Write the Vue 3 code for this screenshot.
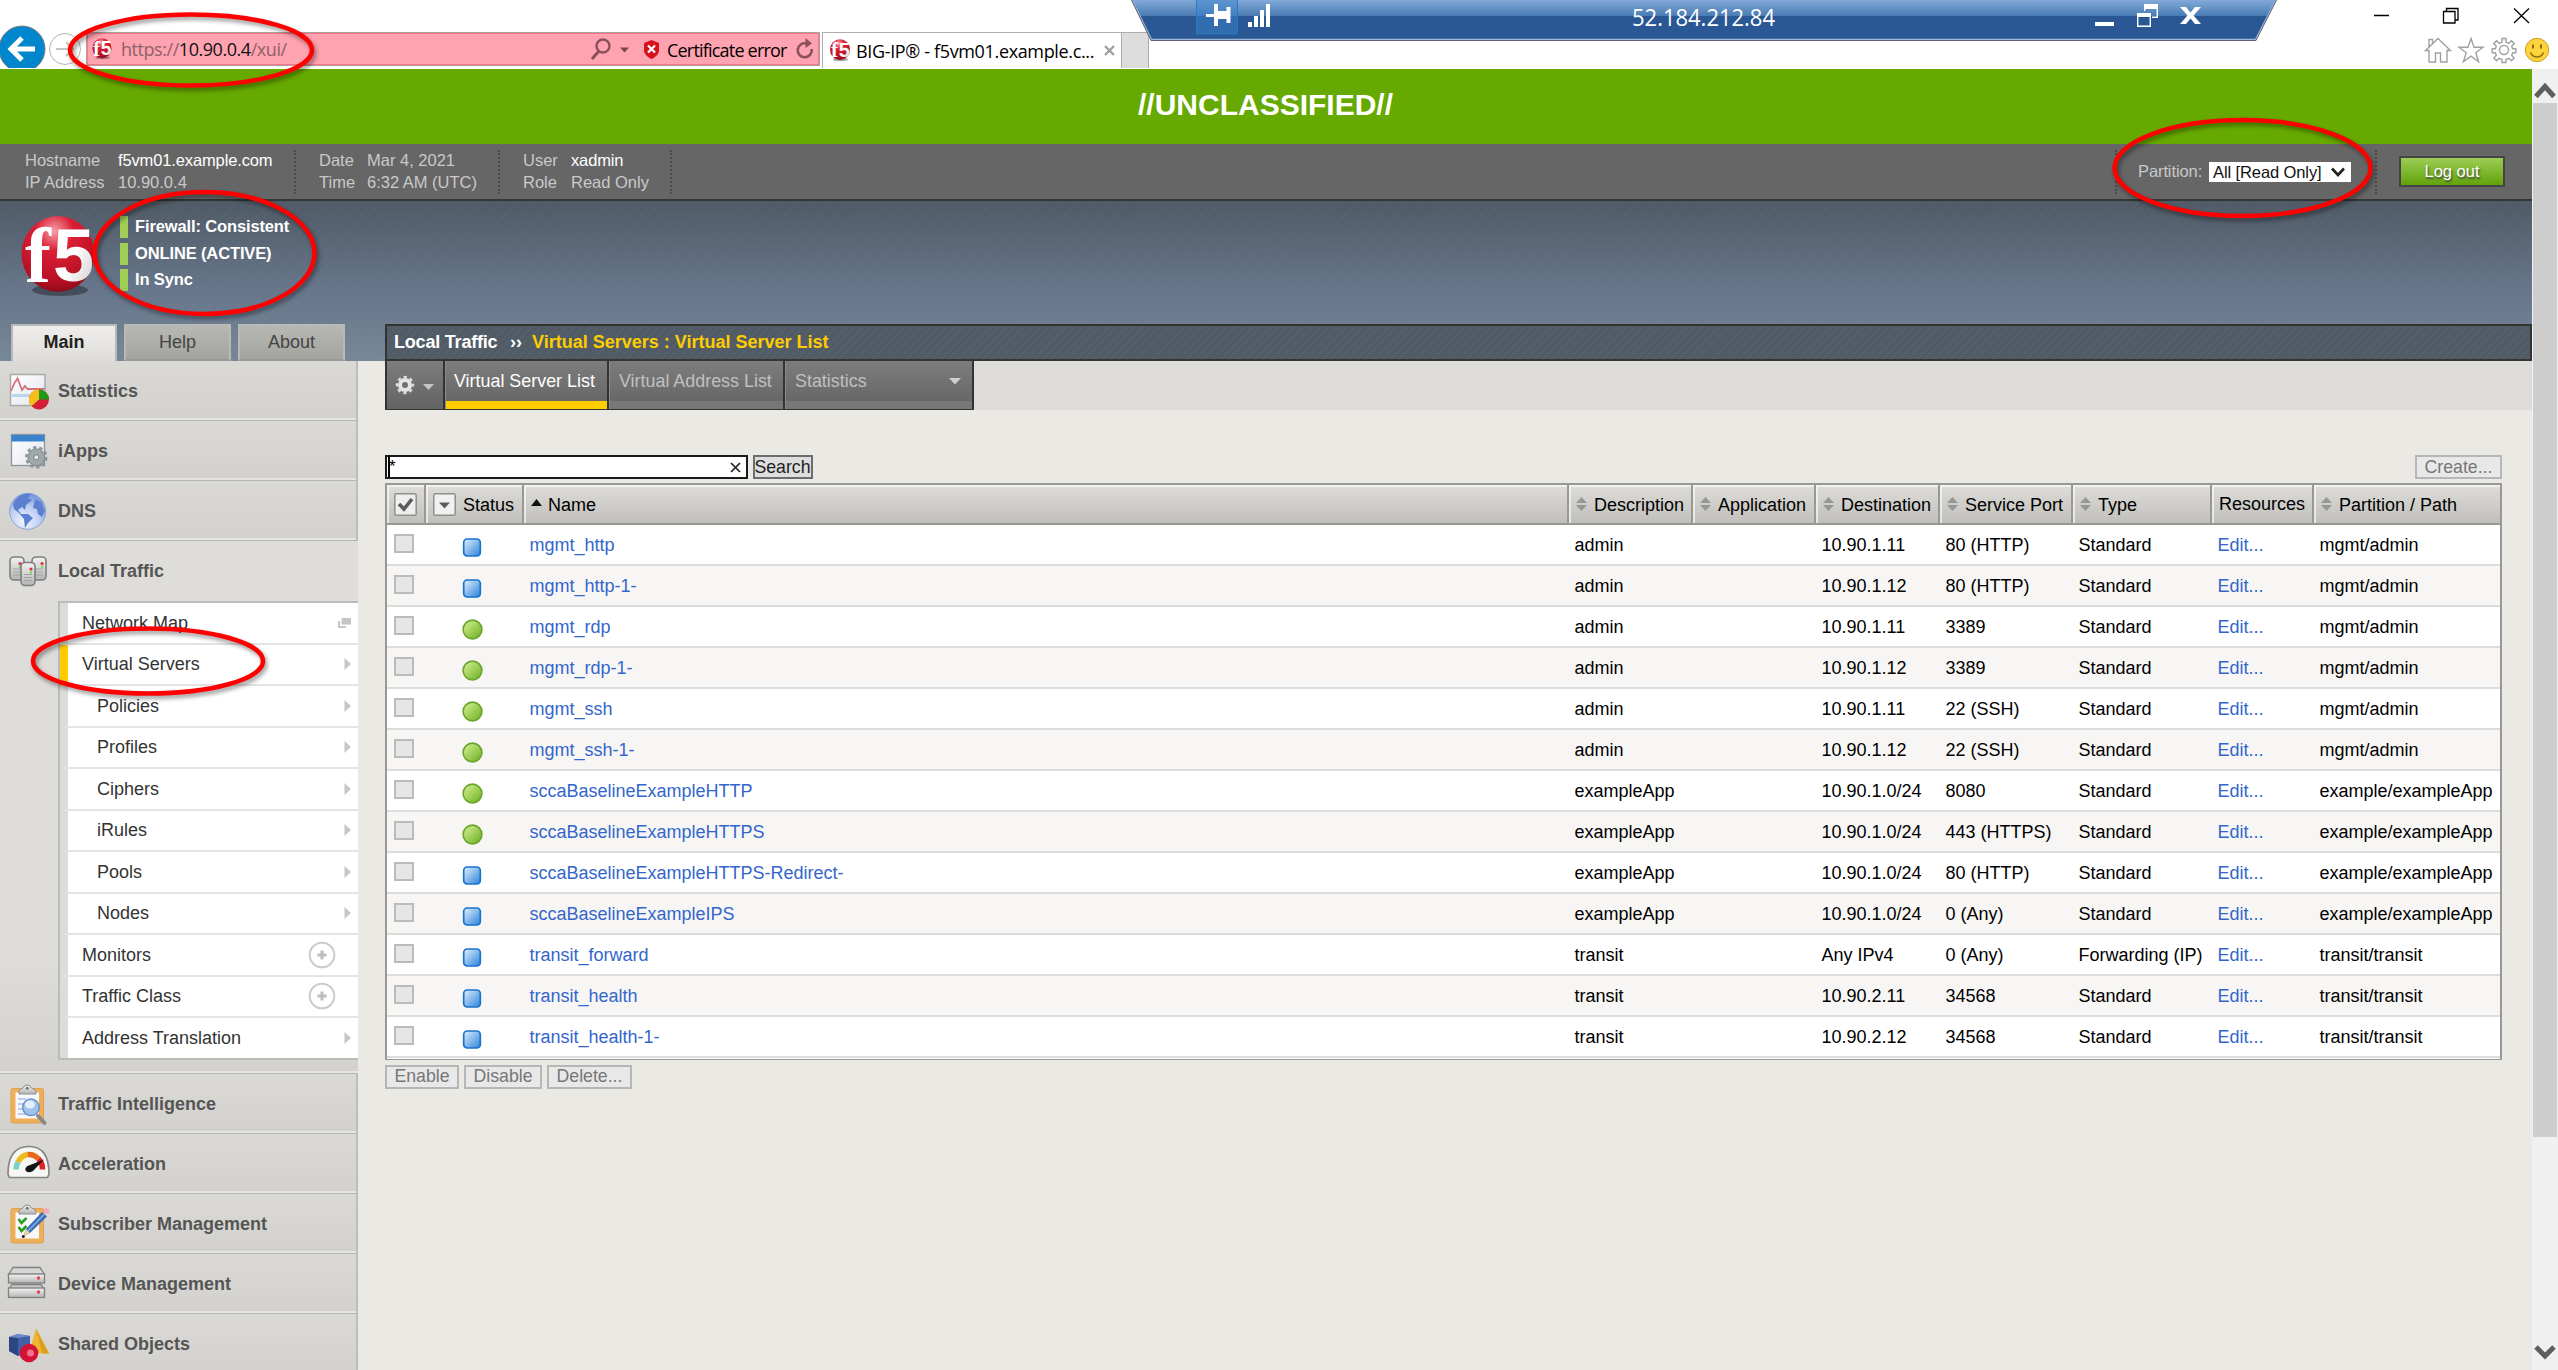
<script setup>
const tabs = ['Main', 'Help', 'About']
const topItems = [
  { label: 'Statistics', icon: 'stats' },
  { label: 'iApps', icon: 'iapps' },
  { label: 'DNS', icon: 'dns' },
  { label: 'Local Traffic', icon: 'traffic', open: true },
]
const bottomItems = [
  { label: 'Traffic Intelligence', icon: 'intel' },
  { label: 'Acceleration', icon: 'accel' },
  { label: 'Subscriber Management', icon: 'subscriber' },
  { label: 'Device Management', icon: 'device' },
  { label: 'Shared Objects', icon: 'shared' },
]
const submenu = [
  { label: 'Network Map', mark: 'window' },
  { label: 'Virtual Servers', mark: 'arrow', active: true },
  { label: 'Policies', mark: 'arrow', child: true },
  { label: 'Profiles', mark: 'arrow', child: true },
  { label: 'Ciphers', mark: 'arrow', child: true },
  { label: 'iRules', mark: 'arrow', child: true },
  { label: 'Pools', mark: 'arrow', child: true },
  { label: 'Nodes', mark: 'arrow', child: true },
  { label: 'Monitors', mark: 'plus' },
  { label: 'Traffic Class', mark: 'plus' },
  { label: 'Address Translation', mark: 'arrow' },
]
const statuses = ['Firewall: Consistent', 'ONLINE (ACTIVE)', 'In Sync']
const sortable = ['Description', 'Application', 'Destination', 'Service Port', 'Type']
const row = (up, name, desc, dest, port, path, type = 'Standard') => ({ up, name, desc, dest, port, type, path })
const rows = [
  row(false, 'mgmt_http', 'admin', '10.90.1.11', '80 (HTTP)', 'mgmt/admin'),
  row(false, 'mgmt_http-1-', 'admin', '10.90.1.12', '80 (HTTP)', 'mgmt/admin'),
  row(true, 'mgmt_rdp', 'admin', '10.90.1.11', '3389', 'mgmt/admin'),
  row(true, 'mgmt_rdp-1-', 'admin', '10.90.1.12', '3389', 'mgmt/admin'),
  row(true, 'mgmt_ssh', 'admin', '10.90.1.11', '22 (SSH)', 'mgmt/admin'),
  row(true, 'mgmt_ssh-1-', 'admin', '10.90.1.12', '22 (SSH)', 'mgmt/admin'),
  row(true, 'sccaBaselineExampleHTTP', 'exampleApp', '10.90.1.0/24', '8080', 'example/exampleApp'),
  row(true, 'sccaBaselineExampleHTTPS', 'exampleApp', '10.90.1.0/24', '443 (HTTPS)', 'example/exampleApp'),
  row(false, 'sccaBaselineExampleHTTPS-Redirect-', 'exampleApp', '10.90.1.0/24', '80 (HTTP)', 'example/exampleApp'),
  row(false, 'sccaBaselineExampleIPS', 'exampleApp', '10.90.1.0/24', '0 (Any)', 'example/exampleApp'),
  row(false, 'transit_forward', 'transit', 'Any IPv4', '0 (Any)', 'transit/transit', 'Forwarding (IP)'),
  row(false, 'transit_health', 'transit', '10.90.2.11', '34568', 'transit/transit'),
  row(false, 'transit_health-1-', 'transit', '10.90.2.12', '34568', 'transit/transit'),
]
</script>

<template>
  <div class="screen">
    <!-- shared gradients -->
    <svg class="defs" width="0" height="0">
      <defs>
        <radialGradient id="ball" cx=".45" cy=".2" r=".85">
          <stop offset="0" stop-color="#f4a0a8" /><stop offset=".3" stop-color="#dc1f35" />
          <stop offset=".8" stop-color="#b40f22" /><stop offset="1" stop-color="#7c0a16" />
        </radialGradient>
        <linearGradient id="digit" x1="0" y1="0" x2="1" y2="1">
          <stop offset=".5" stop-color="#fff" /><stop offset="1" stop-color="#c4c4c4" />
        </linearGradient>
        <linearGradient id="silver" x1="0" y1="0" x2="0" y2="1">
          <stop offset="0" stop-color="#f2f2f2" /><stop offset="1" stop-color="#b4b4b4" />
        </linearGradient>
        <linearGradient id="paper" x1="0" y1="0" x2="1" y2="1">
          <stop offset="0" stop-color="#fff" /><stop offset="1" stop-color="#e4e6ee" />
        </linearGradient>
        <linearGradient id="upfill" x1="0" y1="0" x2="1" y2="1">
          <stop offset="0" stop-color="#d4f0a0" /><stop offset=".35" stop-color="#b2dc6c" /><stop offset="1" stop-color="#6aac20" />
        </linearGradient>
        <linearGradient id="unkfill" x1="0" y1="0" x2="1" y2="1">
          <stop offset="0" stop-color="#e2f0fc" /><stop offset="1" stop-color="#2a84dc" />
        </linearGradient>
        <radialGradient id="globe" cx=".4" cy=".8" r=".9">
          <stop offset="0" stop-color="#f2f6ff" /><stop offset=".5" stop-color="#bccdf2" /><stop offset="1" stop-color="#5f86d8" />
        </radialGradient>
        <symbol id="f5" viewBox="0 0 80 84">
          <ellipse cx="42" cy="75" rx="28" ry="6" fill="#000" opacity=".35" />
          <ellipse cx="40" cy="39" rx="36.500" ry="38" fill="url(#ball)" />
          <text x="7" y="67" font-family="Liberation Serif, serif" font-weight="700" font-size="78" fill="#fff">f</text>
          <text x="35" y="66" font-family="Liberation Sans, sans-serif" font-weight="700" font-size="74" fill="url(#digit)">5</text>
        </symbol>
      </defs>
    </svg>

    <!-- browser chrome -->
    <div class="chrome">
      <svg class="nav" width="86" height="68" viewBox="0 0 86 68">
        <circle cx="22" cy="49" r="23" fill="#0086cd" stroke="#7d7d7d" />
        <path d="M35 49H11M22 38L11 49l11 11" fill="none" stroke="#fff" stroke-width="5" />
        <circle cx="65" cy="49" r="15.5" fill="#fff" stroke="#b5b5b5" />
        <path d="M56 49h17M66 42l7 7-7 7" fill="none" stroke="#c4c4c4" stroke-width="2" />
      </svg>
      <div class="address">
        <svg class="fav" width="22" height="22"><use href="#f5" /></svg>
        <span class="url">https://<b>10.90.0.4</b>/xui/</span>
        <svg width="40" height="22" viewBox="0 0 40 22" class="mag">
          <circle cx="12" cy="8" r="6.5" fill="none" stroke="#8b5059" stroke-width="2.4" />
          <path d="M8 13L1 21" stroke="#8b5059" stroke-width="3" /><path d="M29 9.500h9l-4.500 5z" fill="#7c464e" />
        </svg>
        <svg width="17" height="19" viewBox="0 0 17 19" class="shield">
          <path d="M8.500 0L16 3v7c0 4-3 7-7.500 9C4 17 1 14 1 10V3z" fill="#d6121d" />
          <path d="M5 5.500l7 7M12 5.500l-7 7" stroke="#fff" stroke-width="2.200" />
        </svg>
        <span class="cert">Certificate error</span>
        <svg width="18" height="22" viewBox="0 0 18 22" class="reload">
          <path d="M10.500 5.500A7 7 0 1 0 15.600 11" fill="none" stroke="#8b5059" stroke-width="2.600" /><path d="M9.500 0l6.500 5.500-6.500 4.500z" fill="#8b5059" />
        </svg>
      </div>
      <div class="btab">
        <svg width="22" height="23"><use href="#f5" /></svg>
        <span class="btitle">BIG-IP® - f5vm01.example.c...</span>
        <svg class="bx" width="11" height="11" viewBox="0 0 11 11"><path d="M1 1l9 9M10 1l-9 9" stroke="#9c9c9c" stroke-width="2.200" /></svg>
      </div>
      <div class="newtab"></div>
      <div class="winside">
        <svg width="160" height="69" viewBox="2398 0 160 69">
          <g fill="none" stroke="#000" stroke-width="1.300">
            <path d="M2374 15.500h15M2443.500 11.500h11.500v11.500h-11.500zM2446.500 11.500V8.500h11.500v11.500h-3M2514 8.500l15 14.500M2529 8.500l-15 14.500" />
          </g>
          <g fill="none" stroke="#a0a0a0" stroke-width="1.400">
            <path d="M2425.500 50.500l12.500-12 12.500 12h-3.500v11.500h-6.500v-9h-5v9h-6.500V50.500zM2429 46.500v-7h3.500v4" />
            <path d="M2471 38.500l3 8.700h9l-7.200 5.500 2.800 9-7.600-5.500-7.600 5.500 2.800-9-7.200-5.500h9z" />
            <circle cx="2504" cy="50" r="4.500" />
            <path d="M2502 38.500h4v3.600l2.800 1.200 2.600-2.500 2.800 2.800-2.500 2.600 1.100 2.600h3v4h-3l-1.100 2.600 2.500 2.600-2.800 2.800-2.600-2.500-2.800 1.200v3h-4v-3l-2.800-1.200-2.600 2.500-2.800-2.800 2.500-2.600-1.100-2.600h-3v-4h3l1.100-2.600-2.500-2.600 2.800-2.800 2.600 2.500 2.800-1.200z" />
          </g>
          <circle cx="2537" cy="50" r="11.700" fill="#fdd43c" stroke="#c9a021" />
          <path d="M2533 44.500v4M2541 44.500v4" stroke="#8c6c10" stroke-width="2" />
          <path d="M2530.500 52.500c2.500 6 10.500 6 13 0" fill="none" stroke="#8c6c10" stroke-width="1.600" />
        </svg>
      </div>
    </div>

    <div class="body">
      <div class="page">
        <div class="banner">//UNCLASSIFIED//</div>

        <div class="info">
          <dl class="hostinfo"><dt>Hostname</dt><dd class="hi">f5vm01.example.com</dd><dt>IP Address</dt><dd>10.90.0.4</dd></dl>
          <dl class="dateinfo"><dt>Date</dt><dd>Mar 4, 2021</dd><dt>Time</dt><dd>6:32 AM (UTC)</dd></dl>
          <dl class="userinfo"><dt>User</dt><dd class="hi">xadmin</dd><dt>Role</dt><dd>Read Only</dd></dl>
          <div class="partition">
            <span>Partition:</span>
            <div class="select">All [Read Only]
              <svg width="14" height="10" viewBox="0 0 14 10"><path d="M1 1.500l6 6.500 6-6.500" fill="none" stroke="#222" stroke-width="2.600" /></svg>
            </div>
          </div>
          <div class="logout">Log out</div>
        </div>

        <div class="bluehead">
          <div class="brand">
            <svg width="80" height="84"><use href="#f5" /></svg>
            <ul><li v-for="s in statuses" :key="s">{{ s }}</li></ul>
          </div>
          <div class="headrow">
            <nav class="tabs"><div v-for="(t, i) in tabs" :key="t" :class="['tab', { on: i === 0 }]">{{ t }}</div></nav>
            <div class="crumbs"><span>Local Traffic</span><i>››</i><em>Virtual Servers : Virtual Server List</em></div>
          </div>
        </div>

        <div class="columns">
          <aside class="sidebar">
            <template v-for="group in [topItems, bottomItems]" :key="group[0].label">
              <div v-for="it in group" :key="it.label" :class="['item', { open: it.open }]">
                <svg width="48" height="48" viewBox="0 0 48 48">
                  <g v-if="it.icon === 'stats'">
                    <rect x="6.500" y="7.500" width="34.500" height="31" fill="url(#paper)" stroke="#a9a9a9" stroke-width="1.500" />
                    <rect x="8" y="27" width="26" height="3" fill="#bcd6ee" />
                    <path d="M7 24l3.500-8 3-4.500 4.500 11.500 3-4 2.500 3h17" fill="none" stroke="#d8707a" stroke-width="1.800" />
                    <circle cx="35" cy="32.500" r="10" fill="#d21f35" />
                    <path d="M35 32.500V22.500a10 10 0 0 0-7.500 16.700z" fill="#f6be1c" /><path d="M35 32.500V22.500a10 10 0 0 1 10 10z" fill="#1f9a14" />
                  </g>
                  <g v-else-if="it.icon === 'iapps'">
                    <rect x="7.500" y="7.500" width="33" height="31" fill="url(#paper)" stroke="#8e959c" stroke-width="1.300" />
                    <rect x="7.500" y="8" width="33" height="6.500" fill="#3b82cc" />
                    <circle cx="32.300" cy="30.300" r="8.500" fill="#9fa9a9" stroke="#7d8788" />
                    <circle cx="32.300" cy="30.300" r="10" fill="none" stroke="#8b9596" stroke-width="2.500" stroke-dasharray="3.300 2.930" />
                    <circle cx="32.300" cy="30.300" r="2.500" fill="#e8eaea" stroke="#737c7c" />
                  </g>
                  <g v-else-if="it.icon === 'dns'">
                    <circle cx="23.700" cy="24.300" r="18" fill="url(#globe)" stroke="#8aa2d8" />
                    <path d="M9 17c4-9 12-11 18-10l-3 4 4 2-6 5-1 5-3-3-4 3 3 4 7 0 5 4-5 5-3 5-1-9-5-6-5-4z" fill="#5c80cf" />
                    <path d="M31 12l6 3 4 9-3 6-4-3-1-5-4-1 1-4z" fill="#5c80cf" />
                  </g>
                  <g v-else-if="it.icon === 'traffic'">
                    <g v-for="(p, i) in [[6, 10], [28, 10], [17, 15.500]]" :key="i">
                      <rect :x="p[0]" :y="p[1]" width="14" height="23" rx="4" fill="url(#silver)" stroke="#7e7e7e" stroke-width="1.600" />
                      <path :d="`M${p[0] + 3} ${p[1] + 12}h8m-8 3h8m-8 3h8`" stroke="#a2a2a2" />
                      <circle :cx="p[0] + 10" :cy="p[1] + 6.500" r="1.600" fill="#e4313f" /><circle :cx="p[0] + 10" :cy="p[1] + 9.800" r="1.200" fill="#6fdc4a" />
                    </g>
                  </g>
                  <g v-else-if="it.icon === 'intel' || it.icon === 'subscriber'">
                    <rect x="7" y="8.500" width="32.500" height="34.500" rx="2" fill="#efae58" stroke="#dfa050" />
                    <rect x="11.500" y="12.500" width="23.500" height="26" fill="#f7f8fc" />
                    <path d="M15 14v-2.500q1-3 4-3.500a4.500 4.500 0 0 1 8.500 0q3.500 .5 4.500 3.500v2.500z" fill="url(#silver)" stroke="#8e8e8e" />
                    <circle cx="23.300" cy="8.300" r="1.500" fill="#777" />
                    <g v-if="it.icon === 'intel'">
                      <path d="M14 19h8m-8 5h5m-5 5h5m-5 5h8" stroke="#a9bce6" stroke-width="1.500" />
                      <path d="M34 36l6.500 7" stroke="#8a8a8a" stroke-width="4" stroke-linecap="round" />
                      <circle cx="27" cy="27.300" r="8.300" fill="#9fc4ec" stroke="#6f93c8" stroke-width="1.500" /><ellipse cx="26" cy="24.500" rx="5" ry="4" fill="#e2f0fd" />
                    </g>
                    <g v-else>
                      <path d="M14.500 19l3 4 5-5M14.500 27l3 4 5-5" fill="none" stroke="#2aa01c" stroke-width="2.600" />
                      <path d="M19 37l3-8L38 12l5 4.500L26 33z" fill="#3a6db4" /><path d="M24 31L40.500 14" stroke="#86b0e4" stroke-width="1.500" />
                      <path d="M19 37l3-8 4 4z" fill="#efce98" /><circle cx="19.300" cy="36.500" r="1.500" fill="#222" /><circle cx="42.500" cy="11" r="3" fill="#f4acc2" />
                    </g>
                  </g>
                  <g v-else-if="it.icon === 'accel'">
                    <path d="M4 34q0-27 20.500-27.500T45 34l-1.500 3.500h-38z" fill="#f6f6f4" stroke="#858585" stroke-width="1.700" />
                    <g fill="none" stroke-width="5.500">
                      <path d="M12 29.500q0-4 2-7.500" stroke="#79d3ca" /><path d="M14 22q3.500-6.500 9.500-7.500" stroke="#edbb1c" />
                      <path d="M23.500 14.500q7-.5 11 4.500" stroke="#ea6a1c" /><path d="M34.500 19q4 4 4 10.500" stroke="#e31e24" />
                    </g>
                    <path d="M40 19.500L29 31q-5 2.500-7 0t1.500-5z" fill="#141414" />
                  </g>
                  <g v-else-if="it.icon === 'device'" stroke="#808080" stroke-width="1.300">
                    <path d="M8 24.500h29l3.500 5h-36z" fill="#c9c9c9" /><rect x="4.500" y="28" width="36" height="9.500" fill="url(#silver)" />
                    <path d="M9 7.500h27l4.500 7h-36z" fill="#d6d6d6" /><rect x="4.500" y="14" width="36" height="9" fill="url(#silver)" />
                    <g fill="#ee3c4a" stroke="none"><circle cx="34.500" cy="18" r="1.700" /><circle cx="34.500" cy="32" r="1.700" /></g>
                  </g>
                  <g v-else>
                    <path d="M5 17l9-3 12 2v17l-12 3-9-5z" fill="#4261a4" /><path d="M5 17l9 1 12-2-12-2z" fill="#6d8bcb" /><path d="M5 17l9 1v18l-9-5z" fill="#2c4681" />
                    <path d="M32 8.500L25 33l20 0.500z" fill="#f0b531" /><path d="M32 8.500l6 25 7 0z" fill="#dc9f20" />
                    <circle cx="25" cy="33" r="9.300" fill="#d31236" /><circle cx="26.500" cy="33" r="3.500" fill="#f0738c" />
                  </g>
                </svg>
                <span>{{ it.label }}</span>
              </div>
              <div v-if="group === topItems" class="subwrap">
                <div class="submenu">
                  <div v-for="s in submenu" :key="s.label" :class="['sub', { child: s.child, active: s.active }]">
                    <span>{{ s.label }}</span>
                    <svg v-if="s.mark === 'arrow'" width="7" height="12" viewBox="0 0 7 12"><path d="M0.500 0L7 6 .5 12z" fill="#c6c6c6" /></svg>
                    <svg v-else-if="s.mark === 'window'" width="13" height="10" viewBox="0 0 13 10"><path d="M3.500 0H13v6.500H3.500zM0 3h2v5h6v2H0z" fill="#c6c6c6" /></svg>
                    <svg v-else class="plus" width="28" height="28" viewBox="0 0 28 28"><circle cx="14" cy="14" r="12.300" fill="none" stroke="#cbcbcb" stroke-width="2" /><path d="M14 9.500v9M9.500 14h9" stroke="#bdbdbd" stroke-width="3" /></svg>
                  </div>
                </div>
              </div>
            </template>
          </aside>

          <main class="content">
            <div class="menubar">
              <div class="gearcell">
                <svg width="40" height="20" viewBox="0 0 40 20">
                  <circle cx="10" cy="10" r="5" fill="none" stroke="#e4e4e4" stroke-width="4" /><circle cx="10" cy="10" r="8" fill="none" stroke="#dcdcdc" stroke-width="2.500" stroke-dasharray="3.200 3.083" stroke-dashoffset="1.600" />
                  <path d="M28 9h11l-5.500 6z" fill="#c4c4c4" />
                </svg>
              </div>
              <div class="mtab on vsl">Virtual Server List</div>
              <div class="mtab val">Virtual Address List</div>
              <div class="mtab st">Statistics<svg width="12" height="7" viewBox="0 0 12 7"><path d="M0 0h12L6 6.500z" fill="#d0d0d0" /></svg></div>
            </div>

            <div class="panel">
              <div class="toolbar">
                <div class="searchbox"><span>*</span><svg width="11" height="11" viewBox="0 0 11 11"><path d="M1 1l9 9M10 1l-9 9" stroke="#222" stroke-width="1.700" /></svg></div>
                <div class="btn search">Search</div>
                <div class="btn off create">Create...</div>
              </div>

              <div class="grid">
                <div class="tr head">
                  <div class="th box"><svg width="23" height="23" viewBox="0 0 23 23"><rect x=".8" y=".8" width="21.400" height="21.400" rx="1.500" fill="#eee" stroke="#8f8f8f" stroke-width="1.500" /><path d="M5 11l5 5 8-10" fill="none" stroke="#5c5c5c" stroke-width="3.600" /></svg></div>
                  <div class="th box"><svg width="23" height="23" viewBox="0 0 23 23"><rect x=".8" y=".8" width="21.400" height="21.400" rx="1.500" fill="#f1f1f1" stroke="#8f8f8f" stroke-width="1.500" /><path d="M6 9.500h11L11.500 15.500z" fill="#5c5c5c" /></svg><span class="sttext">Status</span></div>
                  <div class="th nm"><svg width="11" height="7" viewBox="0 0 11 7"><path d="M5.500 0L11 7H0z" fill="#111" /></svg><span>Name</span></div>
                  <div v-for="h in sortable" :key="h" class="th"><svg class="sort" width="11" height="14" viewBox="0 0 11 14"><path d="M5.500 0L11 6H0zM0 8h11l-5.500 6z" fill="#979797" /></svg><span>{{ h }}</span></div>
                  <div class="th res"><span>Resources</span></div>
                  <div class="th"><svg class="sort" width="11" height="14" viewBox="0 0 11 14"><path d="M5.500 0L11 6H0zM0 8h11l-5.500 6z" fill="#979797" /></svg><span>Partition / Path</span></div>
                </div>
                <div v-for="r in rows" :key="r.name" class="tr">
                  <div class="td"><i class="check"></i></div>
                  <div class="td">
                    <svg v-if="r.up" class="state" width="21" height="21" viewBox="0 0 21 21"><circle cx="10.500" cy="10.500" r="9.400" fill="url(#upfill)" stroke="#6aa52c" stroke-width="1.600" /></svg>
                    <svg v-else class="state" width="21" height="21" viewBox="0 0 21 21"><rect x="1.700" y="2" width="16.600" height="17" rx="3.500" fill="url(#unkfill)" stroke="#1a72cc" stroke-width="1.700" /></svg>
                  </div>
                  <div class="td link">{{ r.name }}</div>
                  <div class="td">{{ r.desc }}</div>
                  <div class="td"></div>
                  <div class="td">{{ r.dest }}</div>
                  <div class="td">{{ r.port }}</div>
                  <div class="td">{{ r.type }}</div>
                  <div class="td link">Edit...</div>
                  <div class="td">{{ r.path }}</div>
                </div>
              </div>

              <div class="actions"><div class="btn off">Enable</div><div class="btn off">Disable</div><div class="btn off">Delete...</div></div>
            </div>
          </main>
        </div>
      </div>

      <div class="scrollbar">
        <svg width="26" height="34" viewBox="0 0 26 34"><path d="M4 27.500l9-10 9 10" fill="none" stroke="#5e5e5e" stroke-width="5" /></svg>
        <div class="thumb"></div>
        <svg class="down" width="26" height="34" viewBox="0 0 26 34"><path d="M4 11l9 9 9-9" fill="none" stroke="#5e5e5e" stroke-width="5" /></svg>
      </div>
    </div>

    <!-- remote desktop connection bar -->
    <svg class="rdp" width="1146" height="42" viewBox="1131 0 1146 42">
      <defs>
        <linearGradient id="rdpfill" x1="0" y1="0" x2="0" y2="1">
          <stop offset="0" stop-color="#82a9d7" /><stop offset=".39" stop-color="#4a7db5" /><stop offset=".4" stop-color="#2a5894" /><stop offset="1" stop-color="#2a5894" />
        </linearGradient>
      </defs>
      <path d="M1132 0l19 40h1105l20-40z" fill="url(#rdpfill)" />
      <path d="M1132 0L1151.500 39.500H2255.500L2276 0" fill="none" stroke="#9db4d6" stroke-width="1.500" />
      <path d="M1131.500 0L1151 40.500H2256L2276.500 0" fill="none" stroke="#5d6572" />
      <path d="M1196.500 -1h41v35h-41z" fill="#3a82cc" fill-opacity=".5" stroke="#2a78c8" />
      <path d="M1206 14h9v3h-9zM1214 4h4v22h-4zM1218 11h9v8h-9zM1226.500 7h4v16h-4z" fill="#fff" />
      <path d="M1248 22h4v5h-4zM1254 16h4v11h-4zM1260 10h4v17h-4zM1266 4h4v23h-4zM2095 22h19v4h-19z" fill="#fff" />
      <text x="1632" y="26" textLength="143" lengthAdjust="spacingAndGlyphs" font-family="Open Sans, Noto Sans, sans-serif" font-size="23" fill="#fff">52.184.212.84</text>
      <path d="M2137.700 14h12.600v12.300h-12.600zM2144.700 11V5h12.600v12.300H2152" fill="none" stroke="#fff" stroke-width="1.400" />
      <path d="M2137 13h14v4h-14zM2144 4h14v5h-14z" fill="#fff" />
      <path d="M2180 7h6l4.500 5.500L2195 7h6l-7.500 8.500 7.500 8.500h-6l-4.500-5.500-4.500 5.500h-6l7.500-8.500z" fill="#fff" />
    </svg>

    <!-- red annotation rings -->
    <svg class="rings" width="2558" height="1370" viewBox="0 0 2558 1370">
      <g fill="none" stroke="#f00" stroke-width="4.500">
        <ellipse cx="191" cy="50" rx="121" ry="35.500" /><ellipse cx="204.500" cy="253" rx="110" ry="61" />
        <ellipse cx="2242.500" cy="168" rx="128" ry="48" /><ellipse cx="148" cy="661" rx="115" ry="32.500" />
      </g>
    </svg>
  </div>
</template>

<style>
body { margin: 0; overflow: hidden; }
</style>

<style scoped>
* { box-sizing: border-box; }
.screen { position: relative; width: 2558px; height: 1370px; overflow: hidden; background: #fff; font: 18px/20px "Liberation Sans", Arial, sans-serif; color: #000; white-space: nowrap; display: flex; flex-direction: column; }
svg { display: block; flex: none; overflow: hidden; }
.defs { position: absolute; }
.rdp { position: absolute; left: 1131px; top: 0; }
.rings { position: absolute; inset: 0; pointer-events: none; }
.rings g { filter: drop-shadow(2px 3px 2px rgba(0, 0, 0, .4)); }

.chrome { height: 69px; flex: none; display: flex; font-family: "Open Sans", "Noto Sans", sans-serif; font-size: 18px; }
.nav { height: 68px; }
.address { width: 734px; height: 34px; margin-top: 32px; display: flex; align-items: center; background: #ffa3b1; border: 1px solid #a9a2a4; box-shadow: inset 0 0 0 1px #ff7482; padding-left: 4px; }
.url { color: #8d6167; margin-left: 8px; width: 470px; letter-spacing: -.45px; }
.url b { font-weight: 400; color: #111; }
.mag { margin-top: -1px; }
.shield { margin-left: 12px; }
.cert { margin: 1px 0 0 7px; width: 129px; letter-spacing: -.8px; }
.btab { width: 300px; height: 36px; margin: 32px 0 0 2px; border: 1px solid #adadad; border-width: 1px 1px 0; display: flex; align-items: center; padding-left: 6px; }
.btitle { margin-left: 5px; width: 248px; letter-spacing: -.35px; }
.newtab { width: 27px; height: 36px; margin-top: 32px; background: #dcdcdc; border: 1px solid #adadad; border-width: 1px 1px 0 0; }
.winside { flex: 1; display: flex; justify-content: flex-end; }
.winside svg { overflow: visible; }

.body { flex: 1; display: flex; min-height: 0; }
.page { width: 2532px; display: flex; flex-direction: column; }
.banner { height: 75px; flex: none; background: #66a900; color: #fff; font: bold 30px/72px "Liberation Sans", Arial, sans-serif; text-align: center; padding-right: 1px; }
.info { height: 57px; flex: none; background: #666; border-bottom: 2px solid #343536; display: flex; font-size: 16.500px; line-height: 22px; color: #c9c9c9; padding: 6px 27px 0 0; }
.info dl { margin: 0; display: grid; align-content: start; height: 44px; padding-left: 23px; border-right: 2px dotted #4b4b4b; }
.info dt, .info dd { margin: -1px 0 1px; }
.info .hi { color: #fff; letter-spacing: -.13px; }
.info .hostinfo { grid-template-columns: 93px 1fr; width: 296px; padding-left: 25px; }
.info .dateinfo { grid-template-columns: 48px 1fr; width: 204px; }
.info .userinfo { grid-template-columns: 48px 1fr; width: 172px; }
.partition { margin-left: auto; width: 262px; height: 44px; border: 2px dotted #4b4b4b; border-width: 0 2px; display: flex; align-items: center; padding-left: 21px; }
.partition span { width: 71px; margin-top: -2px; letter-spacing: -.1px; }
.select { width: 142px; height: 20px; background: #fff; color: #111; line-height: 18px; padding: 0 6px 0 4px; display: flex; align-items: center; justify-content: space-between; letter-spacing: -.1px; }
.logout { margin: 6px 0 0 22px; width: 106px; height: 31px; border: 2px solid #444; background: linear-gradient(#9ccd55, #62a30a); color: #fff; text-align: center; line-height: 27px; text-shadow: 1px 2px 2px #444; }

.bluehead { height: 160px; flex: none; display: flex; flex-direction: column; justify-content: space-between; background: repeating-linear-gradient(135deg, rgba(255, 255, 255, .014) 0 2px, transparent 2px 6px), linear-gradient(#4f5a65, #66758a 55%, #768798); }
.brand { display: flex; padding: 14px 0 0 18px; }
.brand ul { list-style: none; margin: 1px 0 0 22px; padding: 0; display: flex; flex-direction: column; gap: 4.500px; }
.brand li { border-left: 8px solid #a0ce56; padding-left: 7px; height: 22px; font: bold 16.500px/21px "Liberation Sans", Arial, sans-serif; letter-spacing: -.13px; color: #fff; }
.headrow { display: flex; height: 37px; }
.tabs { width: 385px; display: flex; gap: 7px; padding-left: 11px; }
.tab { width: 107px; border: 2px solid #b9b9b7; border-bottom-color: #999; background: linear-gradient(#b7b8b3, #a3a49e); color: #444; text-align: center; line-height: 33px; }
.tab.on { width: 106px; background: linear-gradient(#efeeec, #dddcd8); color: #222; font-weight: 700; border-bottom: 0; }
.crumbs { flex: 1; border: 2px solid #333; background: repeating-linear-gradient(135deg, rgba(255, 255, 255, .025) 0 2px, transparent 2px 6px), #505b66; color: #fff; font: bold 18px/32px "Liberation Sans", Arial, sans-serif; display: flex; padding-left: 7px; }
.crumbs span { width: 116px; letter-spacing: -.2px; }
.crumbs i { font-style: normal; width: 22px; }
.crumbs em { font-style: normal; color: #fc0; }

.columns { flex: 1; display: flex; min-height: 0; background: #eae9e4; }
.sidebar { width: 358px; background: #dddcd8; overflow: hidden; }
.item { height: 60px; flex: none; border-right: 2px solid #bcbcba; border-bottom: 1px solid #b5b5b2; background: linear-gradient(#dad9d6, #d2d1cd); box-shadow: inset 0 -2px #e6e5e2; display: flex; padding: 6px 0 0 4px; color: #555; font-weight: 700; }
.item span { margin-left: 6px; line-height: 48px; }
.item.open { background: #dedddA; border-color: transparent; box-shadow: none; }
.subwrap { padding-left: 58px; background: linear-gradient(#dedddA 75%, #d2d1cd); height: 473px; border-bottom: 1px solid #b5b5b2; box-shadow: inset 0 -2px #e6e5e2; }
.submenu { border: 2px solid #bbb; border-right: 0; background: #fff; height: 458.500px; overflow: hidden; }
.sub { height: 41.500px; border-left: 8px solid #dcdcdc; border-bottom: 2px solid #e4e4e4; display: flex; align-items: center; justify-content: space-between; padding: 0 7px 0 14px; color: #333; }
.sub.child { padding-left: 29px; }
.sub.active { border-left-color: #fc0; }
.sub .plus { margin-right: 15px; }

.content { flex: 1; display: flex; flex-direction: column; align-items: flex-start; padding-left: 27px; }
.menubar { align-self: stretch; height: 49px; display: flex; background: #dddcd8; color: #c0c0c0; line-height: 40px; }
.menubar > div { border: solid #333; border-width: 0 2px 1px 0; background: linear-gradient(#7d7d7d, #636363); }
.menubar .gearcell { width: 60px; border-left-width: 2px; padding: 14px 0 0 8px; }
.mtab { border-left: 0; padding-left: 9px; font-size: 17.900px; box-shadow: inset 1px 0 #8a8a8a, inset 0 -8px #777; }
.mtab.on { color: #fff; box-shadow: inset 1px 0 #8a8a8a, inset 0 -8px #fc0; }
.vsl { width: 164px; }
.val { width: 176px; padding-left: 10px; }
.st { width: 189px; display: flex; justify-content: space-between; padding: 0 11px 0 10px; }
.st svg { margin-top: 17px; }

.panel { width: 2117px; padding-top: 45px; }
.toolbar { display: flex; height: 28px; }
.searchbox { width: 363px; height: 24px; border: 2px solid #1a1a1a; background: #fff; display: flex; align-items: center; justify-content: space-between; padding-right: 5px; line-height: 20px; }
.searchbox span { border-left: 2px solid #000; margin-left: 1px; line-height: 20px; height: 20px; font-size: 17px; text-indent: -1px; }
.btn { height: 24px; border: 2px solid #6d6d6d; background: #dedede; color: #222; font-size: 17.700px; line-height: 20px; text-align: center; }
.btn.off { border-color: #b6b6b6; background: #e8e8e8; color: #777; }
.search { width: 60px; margin-left: 5px; text-indent: -1px; }
.create { width: 87px; margin-left: auto; }

.grid { border: 2px solid #999895; border-bottom-width: 1px; background: #fff; height: 577px; }
.tr { display: grid; grid-template-columns: 39px 98px 1045px 124px 123px 124px 133px 139px 102px 186px; height: 41px; border-bottom: 2px solid #dcdcdc; }
.tr:nth-child(odd) { background: #f7f6f4; }
.tr.head { height: 40px; border-color: #999895; background: linear-gradient(#dedddA, #c0bfbb); }
.th { border-right: 2px solid #999895; box-shadow: inset 2px 2px rgba(255, 255, 255, .6); display: flex; align-items: center; padding: 1px 0 0 7px; }
.th:last-child { border-right: 0; }
.th .sort { margin: -2px 7px 0 0; }
.th.nm svg { margin: -4px 6px 0 0; }
.th.res span { margin-top: -2px; }
.sttext { margin-left: 7px; }
.td { padding-left: 5.500px; line-height: 41px; }
.tr:not(.head) .td { height: 39px; }
.link { color: #36c; }
.check { display: block; width: 20px; height: 19px; margin: 9px 0 0 1.500px; border: 2px solid #bbb; background: #e6e6e6; }
.state { margin: 11.500px 0 0 30.500px; }
.actions { display: flex; gap: 5px; padding-top: 5px; }
.actions .btn { width: 74px; line-height: 19px; }
.actions .btn:nth-child(2) { width: 78px; }
.actions .btn:nth-child(3) { width: 85px; }

.scrollbar { width: 26px; background: #f0f0f0; display: flex; flex-direction: column; align-items: center; }
.thumb { width: 24px; height: 1034px; background: #cdcdcd; }
.down { margin-top: auto; }
</style>
